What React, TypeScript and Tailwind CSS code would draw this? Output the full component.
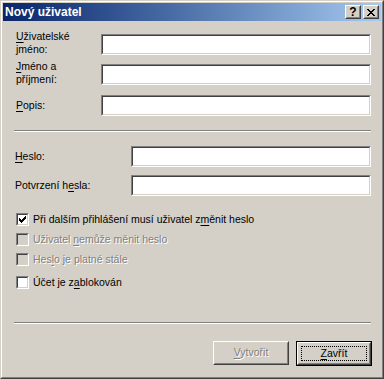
import React from "react";

const Field = ({ className = "" }: { className?: string }) => (
  <div className={`box-border border border-t-[#808080] border-l-[#808080] border-b-white border-r-white ${className}`}>
    <div className="box-border h-full border border-t-[#404040] border-l-[#404040] border-b-[#D4D0C8] border-r-[#D4D0C8] bg-white" />
  </div>
);

const Check = ({ checked = false, disabled = false }: { checked?: boolean; disabled?: boolean }) => (
  <div className="box-border w-[13px] h-[13px] shrink-0 border border-t-[#808080] border-l-[#808080] border-b-white border-r-white">
    <div
      className={`box-border w-full h-full border border-t-[#404040] border-l-[#404040] border-b-[#D4D0C8] border-r-[#D4D0C8] flex items-center justify-center ${
        disabled ? "bg-[#D4D0C8]" : "bg-white"
      }`}
    >
      {checked && (
        <svg width="7" height="7" viewBox="0 0 7 7" shapeRendering="crispEdges">
          <path d="M0 2h1v3h-1zM1 3h1v3h-1zM2 4h1v3h-1zM3 3h1v3h-1zM4 2h1v3h-1zM5 1h1v3h-1zM6 0h1v3h-1z" fill="#000" />
        </svg>
      )}
    </div>
  </div>
);

const Separator = () => (
  <div className="ml-[11px] mr-[10px]">
    <div className="h-px bg-[#808080]" />
    <div className="h-px bg-white" />
  </div>
);

const U = ({ children }: { children: React.ReactNode }) => <span className="underline underline-offset-[2px]">{children}</span>;

const CheckRow = ({
  checked,
  disabled,
  children,
  className = "",
}: {
  checked?: boolean;
  disabled?: boolean;
  children: React.ReactNode;
  className?: string;
}) => (
  <div className={`flex items-center h-[20px] ${className}`}>
    <Check checked={checked} disabled={disabled} />
    <span
      className={`ml-[4px] leading-[13px] ${disabled ? "text-[#808080] [text-shadow:1px_1px_0_#fff]" : "text-black"}`}
    >
      {children}
    </span>
  </div>
);

const CaptionButton = ({ children, className = "" }: { children: React.ReactNode; className?: string }) => (
  <div
    className={`box-border w-[16px] h-[14px] bg-[#D4D0C8] border border-t-white border-l-white border-b-[#404040] border-r-[#404040] ${className}`}
  >
    <div className="box-border w-full h-full border border-t-transparent border-l-transparent border-b-[#808080] border-r-[#808080] flex items-center justify-center">
      {children}
    </div>
  </div>
);

export default function App() {
  return (
    <div className="w-[384px] h-[379px] box-border bg-[#D4D0C8] border border-t-[#D4D0C8] border-l-[#D4D0C8] border-b-[#404040] border-r-[#404040] font-['Liberation_Sans',Arial,sans-serif] text-[10.5px] text-black">
      <div className="box-border w-full h-full border border-t-white border-l-white border-b-[#808080] border-r-[#808080] p-px flex flex-col">
        {/* title bar */}
        <div className="h-[18px] shrink-0 flex items-center bg-gradient-to-r from-[#0A246A] to-[#A6CAF0] pl-[2px] pr-[2px]">
          <span className="text-white font-bold text-[12px] leading-[18px] flex-1">Nový uživatel</span>
          <CaptionButton>
            <span className="font-bold text-[12px] leading-[10px] text-black">?</span>
          </CaptionButton>
          <CaptionButton className="ml-[2px]">
            <svg width="8" height="7" viewBox="0 0 8 7" shapeRendering="crispEdges">
              <path
                d="M0 0h2v1h-2zM6 0h2v1h-2zM1 1h2v1h-2zM5 1h2v1h-2zM2 2h4v1h-4zM3 3h2v1h-2zM2 4h4v1h-4zM1 5h2v1h-2zM5 5h2v1h-2zM0 6h2v1h-2zM6 6h2v1h-2z"
                fill="#000"
              />
            </svg>
          </CaptionButton>
        </div>

        {/* body */}
        <div className="flex flex-col flex-1">
          {/* section 1 */}
          <div className="flex flex-col pl-[13px] pr-[10px] mt-[13px] gap-[8px]">
            <div className="flex items-start">
              <div className="w-[85px] leading-[13px] -mt-[4px]">
                <U>U</U>živatelské
                <br />
                jméno:
              </div>
              <Field className="flex-1 h-[21px]" />
            </div>
            <div className="flex items-start">
              <div className="w-[85px] leading-[13px] -mt-[4px]">
                <U>J</U>méno a
                <br />
                příjmení:
              </div>
              <Field className="flex-1 h-[21px]" />
            </div>
            <div className="flex items-center mt-px">
              <div className="w-[85px] leading-[13px]">
                <U>P</U>opis:
              </div>
              <Field className="flex-1 h-[21px]" />
            </div>
          </div>

          <div className="mt-[14px]">
            <Separator />
          </div>

          {/* section 2 */}
          <div className="flex flex-col pl-[12px] pr-[10px] mt-[14px] gap-[8px]">
            <div className="flex items-center">
              <div className="w-[116px] leading-[13px]">
                <U>H</U>eslo:
              </div>
              <Field className="flex-1 h-[21px]" />
            </div>
            <div className="flex items-center">
              <div className="w-[116px] leading-[13px]">
                Potvrzení h<U>e</U>sla:
              </div>
              <Field className="flex-1 h-[21px]" />
            </div>
          </div>

          {/* checkboxes */}
          <div className="flex flex-col pl-[13px] mt-[13px]">
            <CheckRow checked>
              Při dalším přihlášení musí uživatel z<U>m</U>ěnit heslo
            </CheckRow>
            <CheckRow disabled>
              Uživatel <U>n</U>emůže měnit heslo
            </CheckRow>
            <CheckRow disabled>
              Hes<U>l</U>o je platné stále
            </CheckRow>
            <CheckRow className="mt-[3px]">
              Účet je z<U>a</U>blokován
            </CheckRow>
          </div>

          <div className="mt-[30px]">
            <Separator />
          </div>

          {/* buttons */}
          <div className="flex justify-end pr-[9px] mt-[17px] gap-[7px]">
            <div className="box-border w-[76px] h-[24px] border border-t-white border-l-white border-b-[#404040] border-r-[#404040]">
              <div className="box-border w-full h-full border border-t-transparent border-l-transparent border-b-[#808080] border-r-[#808080] flex items-center justify-center">
                <span className="text-[#808080] [text-shadow:1px_1px_0_#fff]">
                  <U>V</U>ytvořit
                </span>
              </div>
            </div>
            <div className="box-border w-[76px] h-[25px] border border-black">
              <div className="box-border w-full h-full border border-t-white border-l-white border-b-[#404040] border-r-[#404040]">
                <div className="box-border w-full h-full border border-t-transparent border-l-transparent border-b-[#808080] border-r-[#808080] p-[2px]">
                  <div className="box-border w-full h-full border border-dotted border-black flex items-center justify-center">
                    <span>
                      <U>Z</U>avřít
                    </span>
                  </div>
                </div>
              </div>
            </div>
          </div>
        </div>
      </div>
    </div>
  );
}
